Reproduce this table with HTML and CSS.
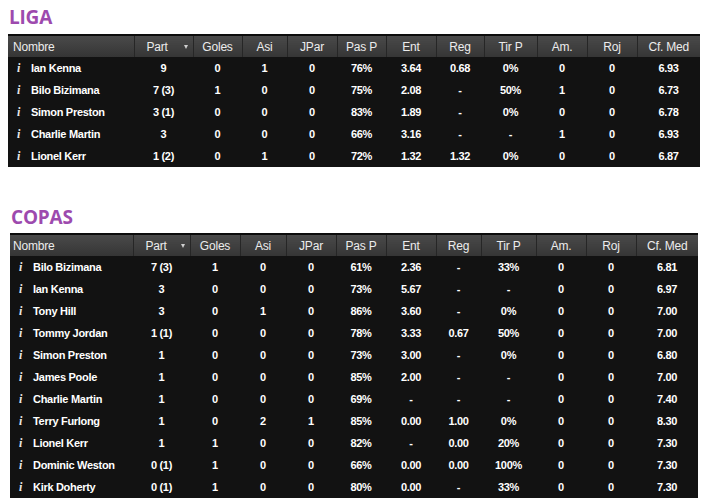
FILE: index.html
```html
<!DOCTYPE html>
<html>
<head>
<meta charset="utf-8">
<link rel="stylesheet" href="styles.css">
</head>
<body>
<section class="block liga">
  <h2 class="title">LIGA</h2>
  <table class="stats">
    <colgroup>
      <col style="width:126px"><col style="width:59px"><col style="width:49px"><col style="width:45px"><col style="width:50px"><col style="width:49px"><col style="width:50px"><col style="width:48px"><col style="width:53px"><col style="width:50px"><col style="width:50px"><col style="width:63px">
    </colgroup>
    <thead>
      <tr><th class="name">Nombre</th><th class="sort">Part<span class="tri"></span></th><th>Goles</th><th>Asi</th><th>JPar</th><th>Pas P</th><th>Ent</th><th>Reg</th><th>Tir P</th><th>Am.</th><th>Roj</th><th>Cf. Med</th></tr>
    </thead>
    <tbody>
      <tr><td class="name"><i class="info">i</i>Ian Kenna</td><td>9</td><td>0</td><td>1</td><td>0</td><td>76%</td><td>3.64</td><td>0.68</td><td>0%</td><td>0</td><td>0</td><td>6.93</td></tr>
      <tr><td class="name"><i class="info">i</i>Bilo Bizimana</td><td>7 (3)</td><td>1</td><td>0</td><td>0</td><td>75%</td><td>2.08</td><td>-</td><td>50%</td><td>1</td><td>0</td><td>6.73</td></tr>
      <tr><td class="name"><i class="info">i</i>Simon Preston</td><td>3 (1)</td><td>0</td><td>0</td><td>0</td><td>83%</td><td>1.89</td><td>-</td><td>0%</td><td>0</td><td>0</td><td>6.78</td></tr>
      <tr><td class="name"><i class="info">i</i>Charlie Martin</td><td>3</td><td>0</td><td>0</td><td>0</td><td>66%</td><td>3.16</td><td>-</td><td>-</td><td>1</td><td>0</td><td>6.93</td></tr>
      <tr><td class="name"><i class="info">i</i>Lionel Kerr</td><td>1 (2)</td><td>0</td><td>1</td><td>0</td><td>72%</td><td>1.32</td><td>1.32</td><td>0%</td><td>0</td><td>0</td><td>6.87</td></tr>
    </tbody>
  </table>
</section>
<section class="block copas">
  <h2 class="title">COPAS</h2>
  <table class="stats">
    <colgroup>
      <col style="width:123px"><col style="width:57px"><col style="width:50px"><col style="width:46px"><col style="width:50px"><col style="width:50px"><col style="width:50px"><col style="width:45px"><col style="width:55px"><col style="width:50px"><col style="width:50px"><col style="width:62px">
    </colgroup>
    <thead>
      <tr><th class="name">Nombre</th><th class="sort">Part<span class="tri"></span></th><th>Goles</th><th>Asi</th><th>JPar</th><th>Pas P</th><th>Ent</th><th>Reg</th><th>Tir P</th><th>Am.</th><th>Roj</th><th>Cf. Med</th></tr>
    </thead>
    <tbody>
      <tr><td class="name"><i class="info">i</i>Bilo Bizimana</td><td>7 (3)</td><td>1</td><td>0</td><td>0</td><td>61%</td><td>2.36</td><td>-</td><td>33%</td><td>0</td><td>0</td><td>6.81</td></tr>
      <tr><td class="name"><i class="info">i</i>Ian Kenna</td><td>3</td><td>0</td><td>0</td><td>0</td><td>73%</td><td>5.67</td><td>-</td><td>-</td><td>0</td><td>0</td><td>6.97</td></tr>
      <tr><td class="name"><i class="info">i</i>Tony Hill</td><td>3</td><td>0</td><td>1</td><td>0</td><td>86%</td><td>3.60</td><td>-</td><td>0%</td><td>0</td><td>0</td><td>7.00</td></tr>
      <tr><td class="name"><i class="info">i</i>Tommy Jordan</td><td>1 (1)</td><td>0</td><td>0</td><td>0</td><td>78%</td><td>3.33</td><td>0.67</td><td>50%</td><td>0</td><td>0</td><td>7.00</td></tr>
      <tr><td class="name"><i class="info">i</i>Simon Preston</td><td>1</td><td>0</td><td>0</td><td>0</td><td>73%</td><td>3.00</td><td>-</td><td>0%</td><td>0</td><td>0</td><td>6.80</td></tr>
      <tr><td class="name"><i class="info">i</i>James Poole</td><td>1</td><td>0</td><td>0</td><td>0</td><td>85%</td><td>2.00</td><td>-</td><td>-</td><td>0</td><td>0</td><td>7.00</td></tr>
      <tr><td class="name"><i class="info">i</i>Charlie Martin</td><td>1</td><td>0</td><td>0</td><td>0</td><td>69%</td><td>-</td><td>-</td><td>-</td><td>0</td><td>0</td><td>7.40</td></tr>
      <tr><td class="name"><i class="info">i</i>Terry Furlong</td><td>1</td><td>0</td><td>2</td><td>1</td><td>85%</td><td>0.00</td><td>1.00</td><td>0%</td><td>0</td><td>0</td><td>8.30</td></tr>
      <tr><td class="name"><i class="info">i</i>Lionel Kerr</td><td>1</td><td>1</td><td>0</td><td>0</td><td>82%</td><td>-</td><td>0.00</td><td>20%</td><td>0</td><td>0</td><td>7.30</td></tr>
      <tr><td class="name"><i class="info">i</i>Dominic Weston</td><td>0 (1)</td><td>1</td><td>0</td><td>0</td><td>66%</td><td>0.00</td><td>0.00</td><td>100%</td><td>0</td><td>0</td><td>7.30</td></tr>
      <tr><td class="name"><i class="info">i</i>Kirk Doherty</td><td>0 (1)</td><td>1</td><td>0</td><td>0</td><td>80%</td><td>0.00</td><td>-</td><td>33%</td><td>0</td><td>0</td><td>7.30</td></tr>
    </tbody>
  </table>
</section>
</body>
</html>
```
FILE: styles.css
```css
html, body {
  margin: 0;
  padding: 0;
  background: #ffffff;
}
body {
  font-family: "Liberation Sans", Arial, sans-serif;
}
.block {
  display: flex;
  flex-direction: column;
}
.liga {
  padding: 7px 0 0 8px;
}
.copas {
  padding: 40px 0 0 10px;
}
.title {
  margin: 0 0 6px 1px;
  font-family: "Open Sans", sans-serif;
  font-weight: 700;
  font-size: 19px;
  line-height: 21px;
  color: #9d4aae;
  letter-spacing: -0.2px;
}
.copas .title {
  margin-bottom: 5px;
}
.stats {
  border-collapse: collapse;
  table-layout: fixed;
  border-top: 2px solid #0c0c0c;
  background: #131313;
}
.liga .stats { width: 692px; }
.copas .stats { width: 688px; }
.stats th {
  height: 21px;
  padding: 0;
  background: linear-gradient(#4a4a4a, #353535);
  color: #ececec;
  font-size: 12px;
  font-weight: normal;
  letter-spacing: -0.2px;
  text-align: center;
  border-left: 1px solid #5e5e5e;
  border-right: 1px solid #262626;
  position: relative;
}
.stats th:first-child { border-left: none; }
.stats th:last-child { border-right: none; }
.stats th.name {
  text-align: left;
  padding-left: 5px;
}
.copas .stats th.name { padding-left: 3px; }
.stats th.sort {
  text-align: left;
  padding-left: 12px;
}
.tri {
  position: absolute;
  right: 5px;
  top: 9px;
  width: 0;
  height: 0;
  border-left: 2.5px solid transparent;
  border-right: 2.5px solid transparent;
  border-top: 4px solid #cfcfcf;
}
.stats td {
  height: 22px;
  padding: 0;
  color: #ffffff;
  font-size: 11px;
  font-weight: bold;
  letter-spacing: -0.3px;
  text-align: center;
  background: #121212;
}
.stats td.name {
  text-align: left;
  padding-left: 9px;
}
.info {
  display: inline-block;
  width: 14px;
  font-family: "Liberation Serif", serif;
  font-style: italic;
  font-weight: bold;
  font-size: 12px;
  color: #e8e8e8;
}
```
